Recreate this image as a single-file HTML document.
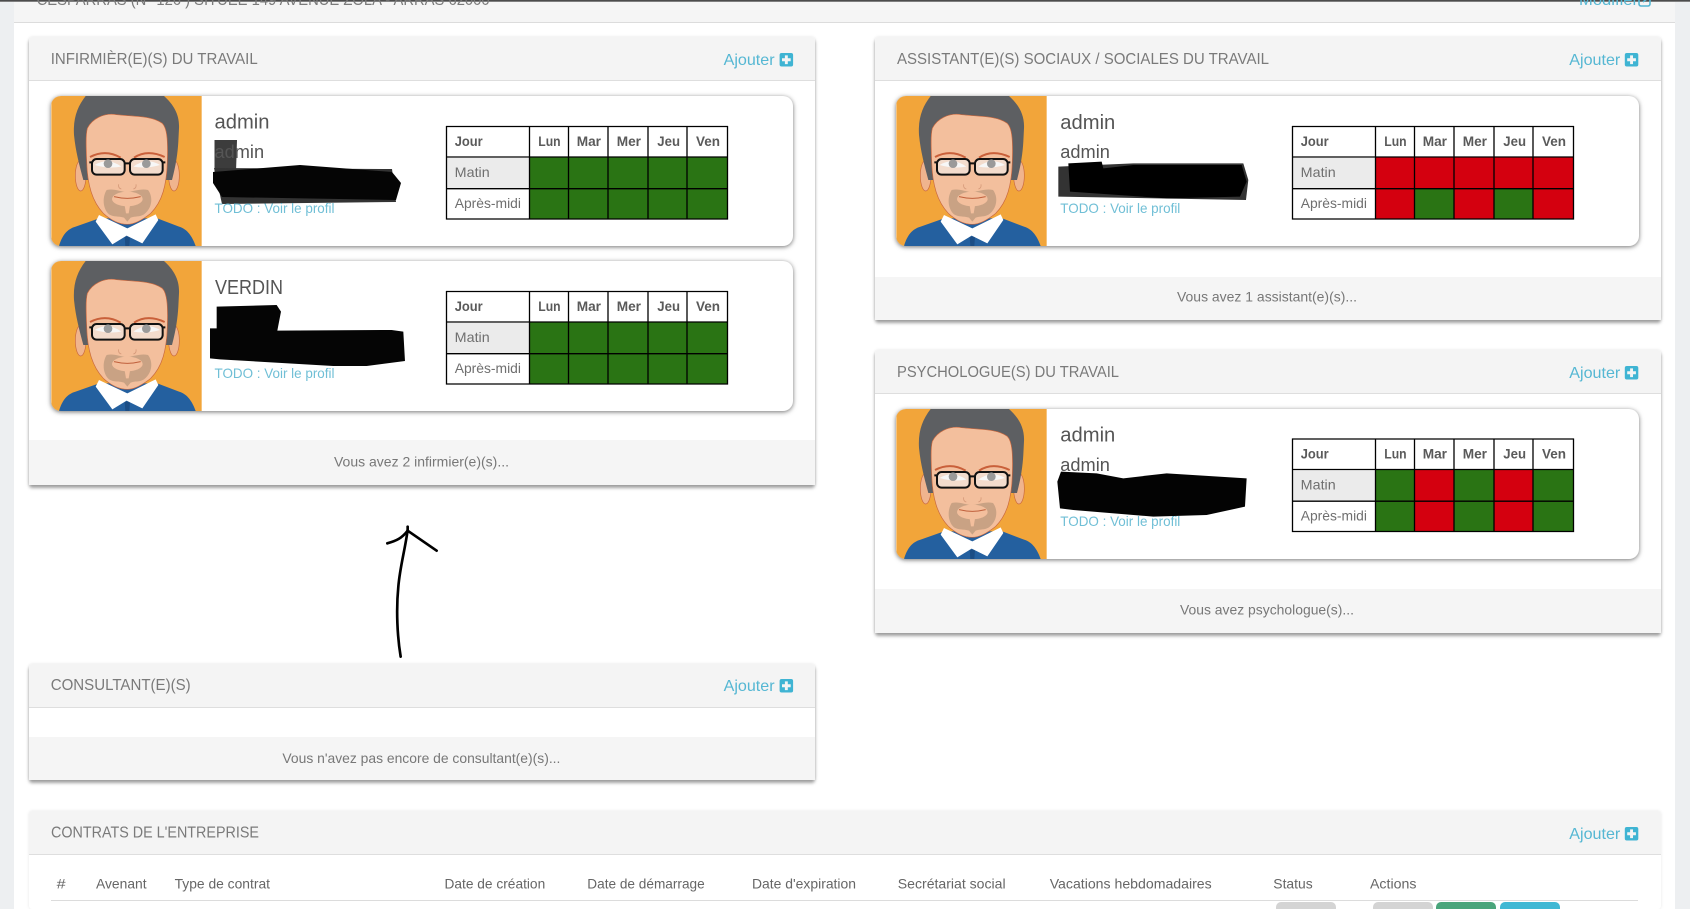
<!DOCTYPE html>
<html lang="fr">
<head>
<meta charset="utf-8">
<title>Entreprise</title>
<style>
html,body{margin:0;padding:0;width:1690px;height:909px;overflow:hidden;background:#edeff1;}
#page{position:relative;width:1690px;height:909px;overflow:hidden;background:#edeff1;}
.abs,.panel,.ph,.pf,.card,.btn{position:absolute;box-sizing:border-box;}
.wrap{position:absolute;left:13.5px;top:0;width:1661.5px;height:909px;background:#fff;}
.tophead{position:absolute;left:13.5px;top:0;width:1661.5px;height:22px;background:#f5f5f5;border-bottom:1px solid #dcdcdc;}
.topline{position:absolute;left:0;top:0;width:1690px;height:2px;background:linear-gradient(#333,#999);}
.panel{background:#fff;border-radius:3px;box-shadow:0 3px 3px rgba(0,0,0,.36),0 0 3px rgba(0,0,0,.1);}
.ph{left:0;top:0;width:100%;background:#f4f4f4;border-bottom:1px solid #dedede;border-radius:3px 3px 0 0;}
.pf{left:0;bottom:0;width:100%;background:#f5f5f5;}
.card{background:#fff;border-radius:10px;overflow:hidden;box-shadow:0 1px 5px rgba(0,0,0,.55);height:150px;}
.card svg{position:absolute;left:0;top:0;}
.btn{top:902px;height:12px;width:60px;border-radius:5px 5px 0 0;}
svg.over{position:absolute;left:0;top:0;}
text{font-family:"Liberation Sans",sans-serif;}
.h{font-size:16px;fill:#7a7a7a;}
.a{font-size:16px;fill:#55b7d3;}
.n1{font-size:20px;fill:#555;}
.n2{font-size:18px;fill:#555;}
.td{font-size:14px;fill:#70bfd6;}
.f{font-size:14px;fill:#777;}
.th{font-size:14px;font-weight:bold;fill:#5a5a5a;}
.tc{font-size:14px;fill:#6f6f6f;}
.ct{font-size:14px;fill:#666;}
</style>
</head>
<body>
<div id="page">
<div class="wrap"></div>
<div class="tophead"></div>
<div class="topline"></div>

<svg width="0" height="0" style="position:absolute">
<defs>
<symbol id="av" viewBox="62 33 451 450">
<rect x="62" y="33" width="451" height="450" fill="#f2a53a"/>
<path d="M85 483C95 450 110 432 135 425L205 400L380 400L445 425C470 432 485 455 495 483Z" fill="#24609f"/>
<path d="M282 455L298 455L296 483L284 483Z" fill="#1b4d85"/>
<ellipse cx="150" cy="272" rx="16" ry="46" fill="#f0b48e" stroke="#c9683f" stroke-width="2"/>
<ellipse cx="430" cy="272" rx="16" ry="46" fill="#f0b48e" stroke="#c9683f" stroke-width="2"/>
<path d="M165 33L400 33C430 60 447 90 445 130L443 170C441 205 436 240 424 285L158 285C146 240 135 200 130 150C127 100 140 65 165 33Z" fill="#5d5f62"/>
<path d="M170 130C185 100 220 85 250 88C300 95 360 90 395 115C410 130 412 170 410 230C408 300 395 350 360 385C335 405 310 418 290 418C265 418 240 405 218 385C185 350 170 300 168 230C166 180 165 150 170 130Z" fill="#f3bf9d" stroke="#c9683f" stroke-width="2"/>
<path d="M228 315C250 310 270 320 288 322C305 320 330 310 352 315C368 335 365 370 340 388C325 397 315 392 300 398L290 410L280 398C262 392 250 397 235 388C215 370 215 335 228 315Z" fill="#c9a284"/>
<ellipse cx="290" cy="342" rx="46" ry="22" fill="#f3bf9d"/>
<path d="M282 362L298 362L294 385L286 385Z" fill="#f3bf9d"/>
<path d="M250 335Q290 345 330 335" fill="none" stroke="#c0603c" stroke-width="3"/>
<path d="M264 298Q262 310 272 312M316 298Q318 310 308 312" fill="none" stroke="#d69a7a" stroke-width="2.5"/>
<path d="M178 216Q225 192 270 218M310 218Q350 192 402 216" fill="none" stroke="#c9603a" stroke-width="6"/>
<rect x="184" y="222" width="98" height="47" rx="14" fill="#f3dccd" stroke="#111" stroke-width="6"/>
<rect x="298" y="222" width="98" height="47" rx="14" fill="#f3dccd" stroke="#111" stroke-width="6"/>
<path d="M192 240Q232 215 272 245Q232 252 192 240ZM308 245Q348 215 388 240Q348 252 308 245Z" fill="#f7f7f7"/>
<circle cx="232" cy="236" r="13" fill="#9a9a9a"/><circle cx="347" cy="236" r="13" fill="#9a9a9a"/>
<path d="M282 235H298M176 232H184M396 232H404" stroke="#111" stroke-width="6"/>
<path d="M205 390L195 410L245 478L288 452L335 475L383 405L375 388L290 430Z" fill="#fff"/>
</symbol>
<path id="grid" fill="none" stroke="#000" stroke-width="1.3" d="M.5 0V93.6M83.5 0V93.6M122.5 0V93.6M162 0V93.6M202 0V93.6M241 0V93.6M281.5 0V93.6M0 .5H282M0 31H282M0 62.7H282M0 93H282"/>
<path id="plus" fill-rule="evenodd" d="M2 0H11.5A2 2 0 0 1 13.5 2V11.5A2 2 0 0 1 11.5 13.5H2A2 2 0 0 1 0 11.5V2A2 2 0 0 1 2 0ZM5.3 2.4V5.3H2.4V8.2H5.3V11.1H8.2V8.2H11.1V5.3H8.2V2.4Z" fill="#3fb4d3"/>
</defs>
</svg>

<div class="panel" style="left:29px;top:37px;width:786px;height:448px"><div class="ph" style="height:43.5px"></div><div class="pf" style="height:45px"></div></div>
<div class="panel" style="left:875px;top:37px;width:786px;height:283px"><div class="ph" style="height:43.5px"></div><div class="pf" style="height:43px"></div></div>
<div class="panel" style="left:875px;top:350px;width:786px;height:283px"><div class="ph" style="height:43.5px"></div><div class="pf" style="height:44px"></div></div>
<div class="panel" style="left:29px;top:664px;width:786px;height:116px"><div class="ph" style="height:43.5px"></div><div class="pf" style="height:43px"></div></div>
<div class="panel" style="left:29px;top:811px;width:1632px;height:98px;box-shadow:0 0 3px rgba(0,0,0,.1)"><div class="ph" style="height:43.5px"></div></div>

<div class="card" style="left:50.7px;top:96px;width:742.3px"><svg width="151" height="150"><use href="#av" width="151" height="150"/></svg></div>
<div class="card" style="left:50.7px;top:261px;width:742.3px"><svg width="151" height="150"><use href="#av" width="151" height="150"/></svg></div>
<div class="card" style="left:896px;top:96px;width:743px"><svg width="151" height="150"><use href="#av" width="151" height="150"/></svg></div>
<div class="card" style="left:896px;top:408.5px;width:743px"><svg width="151" height="150"><use href="#av" width="151" height="150"/></svg></div>

<div class="abs" style="left:51px;top:900px;width:1587px;height:1px;background:#dcdcdc"></div>
<div class="btn" style="left:1276px;background:#d4d4d4"></div>
<div class="btn" style="left:1373px;background:#d4d4d4"></div>
<div class="btn" style="left:1436px;background:#4aa57b"></div>
<div class="btn" style="left:1500px;background:#3fb8d4"></div>

<svg class="over" width="1690" height="909" viewBox="0 0 1690 909">
<!-- top -->
<text class="h" x="36.6" y="5" textLength="453" lengthAdjust="spacingAndGlyphs">CESPARRAS (N° 126 ) SITUEE 149 AVENUE ZOLA - ARRAS 62000</text>
<text class="a" x="1579" y="5" textLength="59" lengthAdjust="spacingAndGlyphs">Modifier</text>
<path d="M1639 -2V4A2 2 0 0 0 1641 6H1648A2 2 0 0 0 1650 4V-2M1643 2L1648 -2" fill="none" stroke="#55b7d3" stroke-width="1.6"/>

<!-- headers -->
<text class="h" x="50.7" y="64" textLength="207" lengthAdjust="spacingAndGlyphs">INFIRMIÈR(E)(S) DU TRAVAIL</text>
<text class="a" x="723.6" y="65" textLength="51" lengthAdjust="spacingAndGlyphs">Ajouter</text>
<use href="#plus" x="779.6" y="53"/>
<text class="h" x="897" y="64" textLength="372" lengthAdjust="spacingAndGlyphs">ASSISTANT(E)(S) SOCIAUX / SOCIALES DU TRAVAIL</text>
<text class="a" x="1569.3" y="65" textLength="51" lengthAdjust="spacingAndGlyphs">Ajouter</text>
<use href="#plus" x="1624.8" y="53"/>
<text class="h" x="897" y="377" textLength="222" lengthAdjust="spacingAndGlyphs">PSYCHOLOGUE(S) DU TRAVAIL</text>
<text class="a" x="1569.3" y="378" textLength="51" lengthAdjust="spacingAndGlyphs">Ajouter</text>
<use href="#plus" x="1624.8" y="366"/>
<text class="h" x="50.7" y="690" textLength="140" lengthAdjust="spacingAndGlyphs">CONSULTANT(E)(S)</text>
<text class="a" x="723.6" y="691" textLength="51" lengthAdjust="spacingAndGlyphs">Ajouter</text>
<use href="#plus" x="779.6" y="679"/>
<text class="h" x="51" y="837.5" textLength="208" lengthAdjust="spacingAndGlyphs">CONTRATS DE L'ENTREPRISE</text>
<text class="a" x="1569.3" y="839" textLength="51" lengthAdjust="spacingAndGlyphs">Ajouter</text>
<use href="#plus" x="1624.8" y="827"/>

<!-- redaction underlay -->
<path d="M214.5 140H237L236 172H214.5Z" fill="#3c3c3c"/>
<path d="M214 168L392 169L396 202L222 204Z" fill="#333"/>

<!-- card texts -->
<text class="n1" x="214.5" y="128.5" textLength="55" lengthAdjust="spacingAndGlyphs">admin</text>
<text class="n2" x="214.5" y="158" textLength="49.6" lengthAdjust="spacingAndGlyphs">admin</text>
<text class="td" x="214.5" y="213" textLength="120" lengthAdjust="spacingAndGlyphs">TODO : Voir le profil</text>
<text class="n1" x="215" y="294" textLength="68" lengthAdjust="spacingAndGlyphs">VERDIN</text>
<text class="td" x="214.5" y="378" textLength="120" lengthAdjust="spacingAndGlyphs">TODO : Voir le profil</text>
<text class="n1" x="1060.3" y="129" textLength="55" lengthAdjust="spacingAndGlyphs">admin</text>
<text class="n2" x="1060.3" y="158" textLength="49.6" lengthAdjust="spacingAndGlyphs">admin</text>
<text class="td" x="1060.3" y="213" textLength="120" lengthAdjust="spacingAndGlyphs">TODO : Voir le profil</text>
<text class="n1" x="1060.3" y="441.5" textLength="55" lengthAdjust="spacingAndGlyphs">admin</text>
<text class="n2" x="1060.3" y="471" textLength="49.6" lengthAdjust="spacingAndGlyphs">admin</text>
<text class="td" x="1060.3" y="526" textLength="120" lengthAdjust="spacingAndGlyphs">TODO : Voir le profil</text>

<!-- redactions -->
<path d="M213 172L300 165L392 172L401 183L396 200L222 197L213 183Z" fill="#050505"/>
<g transform="translate(200 260) scale(.3333)"><path d="M50 140L230 135L243 155L232 212L575 210L610 215L615 303L500 318L400 318L60 298L30 295L30 205L50 205Z" fill="#050505"/></g>
<g transform="translate(1040 100) scale(.3333)"><path d="M55 200L280 190L610 190L625 240L618 300L55 290Z" fill="#333"/><path d="M85 190L185 185L190 205L280 195L605 195L620 245L600 290L380 295L90 275Z" fill="#000"/></g>
<g transform="translate(1040 410) scale(.3333)"><path d="M63 185L170 190L250 205L380 190L620 205L615 290L500 315L340 320L100 300L60 295L52 215Z" fill="#030303"/></g>

<!-- table 1 -->
<g transform="translate(446 126)">
<rect x="1" y="32" width="83" height="31" fill="#ebebeb"/>
<rect x="83.5" y="31" width="198" height="62" fill="#2a7414"/>
<use href="#grid"/>
<text class="th" x="8.7" y="20" textLength="28" lengthAdjust="spacingAndGlyphs">Jour</text><text class="th" x="92.3" y="20" textLength="22.3" lengthAdjust="spacingAndGlyphs">Lun</text><text class="th" x="130.7" y="20" textLength="24.3" lengthAdjust="spacingAndGlyphs">Mar</text><text class="th" x="170.7" y="20" textLength="24.3" lengthAdjust="spacingAndGlyphs">Mer</text><text class="th" x="211.3" y="20" textLength="22.7" lengthAdjust="spacingAndGlyphs">Jeu</text><text class="th" x="250" y="20" textLength="24" lengthAdjust="spacingAndGlyphs">Ven</text>
<text class="tc" x="8.7" y="51.2" textLength="35" lengthAdjust="spacingAndGlyphs">Matin</text><text class="tc" x="8.7" y="82.2" textLength="66.3" lengthAdjust="spacingAndGlyphs">Après-midi</text>
</g>
<!-- table 2 -->
<g transform="translate(446 291)">
<rect x="1" y="32" width="83" height="31" fill="#ebebeb"/>
<rect x="83.5" y="31" width="198" height="62" fill="#2a7414"/>
<use href="#grid"/>
<text class="th" x="8.7" y="20" textLength="28" lengthAdjust="spacingAndGlyphs">Jour</text><text class="th" x="92.3" y="20" textLength="22.3" lengthAdjust="spacingAndGlyphs">Lun</text><text class="th" x="130.7" y="20" textLength="24.3" lengthAdjust="spacingAndGlyphs">Mar</text><text class="th" x="170.7" y="20" textLength="24.3" lengthAdjust="spacingAndGlyphs">Mer</text><text class="th" x="211.3" y="20" textLength="22.7" lengthAdjust="spacingAndGlyphs">Jeu</text><text class="th" x="250" y="20" textLength="24" lengthAdjust="spacingAndGlyphs">Ven</text>
<text class="tc" x="8.7" y="51.2" textLength="35" lengthAdjust="spacingAndGlyphs">Matin</text><text class="tc" x="8.7" y="82.2" textLength="66.3" lengthAdjust="spacingAndGlyphs">Après-midi</text>
</g>
<!-- table 3 -->
<g transform="translate(1292 126)">
<rect x="1" y="32" width="83" height="31" fill="#ebebeb"/>
<rect x="83.5" y="31" width="198" height="62" fill="#d4000f"/>
<rect x="122.5" y="62.7" width="39.5" height="30.5" fill="#2a7414"/>
<rect x="202" y="62.7" width="39" height="30.5" fill="#2a7414"/>
<use href="#grid"/>
<text class="th" x="8.7" y="20" textLength="28" lengthAdjust="spacingAndGlyphs">Jour</text><text class="th" x="92.3" y="20" textLength="22.3" lengthAdjust="spacingAndGlyphs">Lun</text><text class="th" x="130.7" y="20" textLength="24.3" lengthAdjust="spacingAndGlyphs">Mar</text><text class="th" x="170.7" y="20" textLength="24.3" lengthAdjust="spacingAndGlyphs">Mer</text><text class="th" x="211.3" y="20" textLength="22.7" lengthAdjust="spacingAndGlyphs">Jeu</text><text class="th" x="250" y="20" textLength="24" lengthAdjust="spacingAndGlyphs">Ven</text>
<text class="tc" x="8.7" y="51.2" textLength="35" lengthAdjust="spacingAndGlyphs">Matin</text><text class="tc" x="8.7" y="82.2" textLength="66.3" lengthAdjust="spacingAndGlyphs">Après-midi</text>
</g>
<!-- table 4 -->
<g transform="translate(1292 438.5)">
<rect x="1" y="32" width="83" height="31" fill="#ebebeb"/>
<rect x="83.5" y="31" width="198" height="62.5" fill="#2a7414"/>
<rect x="122.5" y="31" width="39.5" height="62.5" fill="#d4000f"/>
<rect x="202" y="31" width="39" height="62.5" fill="#d4000f"/>
<use href="#grid"/>
<text class="th" x="8.7" y="20" textLength="28" lengthAdjust="spacingAndGlyphs">Jour</text><text class="th" x="92.3" y="20" textLength="22.3" lengthAdjust="spacingAndGlyphs">Lun</text><text class="th" x="130.7" y="20" textLength="24.3" lengthAdjust="spacingAndGlyphs">Mar</text><text class="th" x="170.7" y="20" textLength="24.3" lengthAdjust="spacingAndGlyphs">Mer</text><text class="th" x="211.3" y="20" textLength="22.7" lengthAdjust="spacingAndGlyphs">Jeu</text><text class="th" x="250" y="20" textLength="24" lengthAdjust="spacingAndGlyphs">Ven</text>
<text class="tc" x="8.7" y="51.2" textLength="35" lengthAdjust="spacingAndGlyphs">Matin</text><text class="tc" x="8.7" y="82.2" textLength="66.3" lengthAdjust="spacingAndGlyphs">Après-midi</text>
</g>

<!-- footers -->
<text class="f" x="334" y="466.5" textLength="175" lengthAdjust="spacingAndGlyphs">Vous avez 2 infirmier(e)(s)...</text>
<text class="f" x="1177" y="301.5" textLength="180" lengthAdjust="spacingAndGlyphs">Vous avez 1 assistant(e)(s)...</text>
<text class="f" x="1180" y="614.5" textLength="174" lengthAdjust="spacingAndGlyphs">Vous avez psychologue(s)...</text>
<text class="f" x="282.4" y="763" textLength="278" lengthAdjust="spacingAndGlyphs">Vous n'avez pas encore de consultant(e)(s)...</text>

<!-- arrow -->
<g transform="translate(360 510) scale(.3333)" fill="none" stroke="#000" stroke-width="8" stroke-linecap="round" stroke-linejoin="round">
<path d="M122 440C112 380 108 300 115 230C120 170 135 120 143 60"/>
<path d="M143 50V60"/>
<path d="M82 100C110 92 125 85 143 62L230 122"/>
</g>

<!-- contract table head -->
<text class="ct" x="56.6" y="888.5" textLength="9" lengthAdjust="spacingAndGlyphs">#</text>
<text class="ct" x="96" y="888.5" textLength="50.6" lengthAdjust="spacingAndGlyphs">Avenant</text>
<text class="ct" x="174.6" y="888.5" textLength="95.4" lengthAdjust="spacingAndGlyphs">Type de contrat</text>
<text class="ct" x="444.5" y="888.5" textLength="100.7" lengthAdjust="spacingAndGlyphs">Date de création</text>
<text class="ct" x="587.3" y="888.5" textLength="117.4" lengthAdjust="spacingAndGlyphs">Date de démarrage</text>
<text class="ct" x="752" y="888.5" textLength="104" lengthAdjust="spacingAndGlyphs">Date d'expiration</text>
<text class="ct" x="897.8" y="888.5" textLength="107.8" lengthAdjust="spacingAndGlyphs">Secrétariat social</text>
<text class="ct" x="1049.7" y="888.5" textLength="162" lengthAdjust="spacingAndGlyphs">Vacations hebdomadaires</text>
<text class="ct" x="1273.3" y="888.5" textLength="39.4" lengthAdjust="spacingAndGlyphs">Status</text>
<text class="ct" x="1370" y="888.5" textLength="46.4" lengthAdjust="spacingAndGlyphs">Actions</text>
</svg>
</div>
</body>
</html>
